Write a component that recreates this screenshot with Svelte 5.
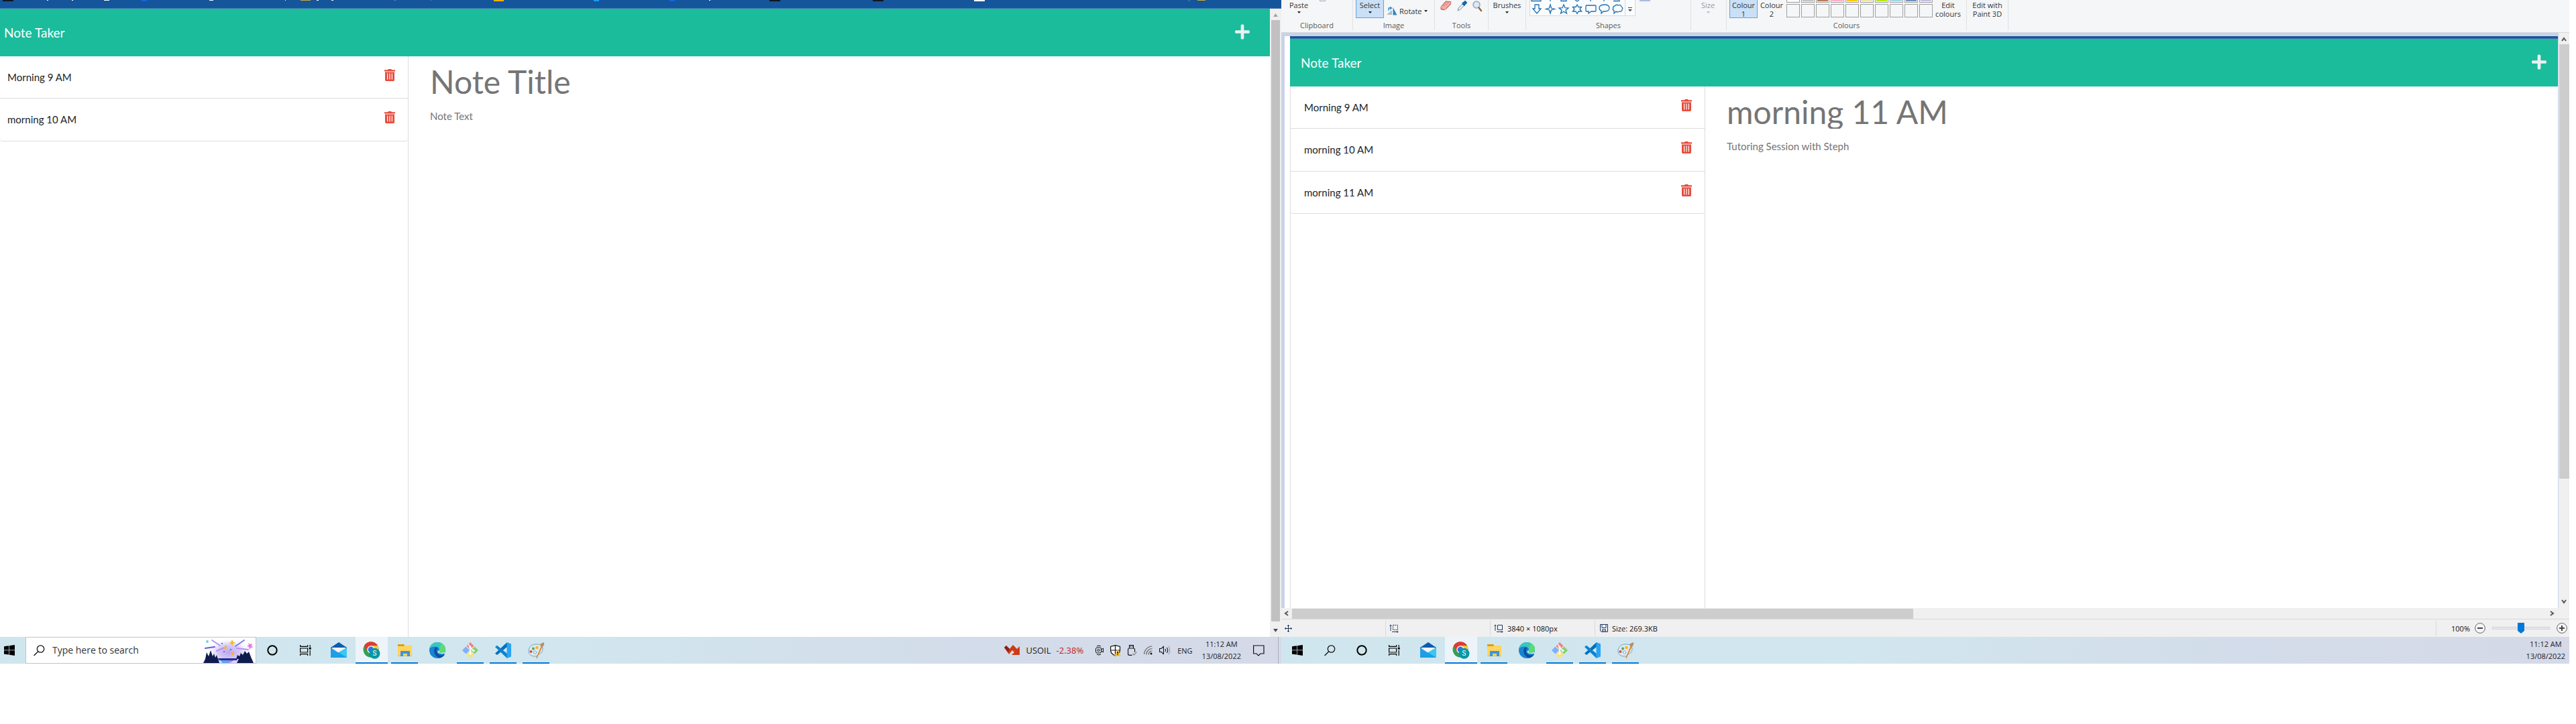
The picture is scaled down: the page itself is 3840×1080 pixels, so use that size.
<script>
  const leftNotes = ['Morning 9 AM', 'morning 10 AM'];
  const rightNotes = ['Morning 9 AM', 'morning 10 AM', 'morning 11 AM'];
  const swatches = ['#ffffff', '#c3c3c3', '#b97a57', '#ffaec9', '#ffc90e', '#efe4b0', '#b5e61d', '#99d9ea', '#7092be', '#c8bfe7'];
  const apps = [
    { name: 'Mail' },
    { name: 'Chrome', active: true },
    { name: 'Explorer', open: true },
    { name: 'Edge' },
    { name: 'Git', open: true },
    { name: 'Code', open: true },
    { name: 'Paint', open: true }
  ];
  let searchText = $state('');
  let zoom = $state(50);
</script>

{#snippet trash()}
  <svg width="16" height="18" viewBox="0 0 16 18" fill="currentColor" aria-hidden="true">
    <path d="M5 1.200 6 0h4l1 1.200h5V3.400H0V1.200zM1 4.600h14V16.600L14 18H2L1 16.600zM4 6.500v9h1.200v-9zM7.400 6.500v9h1.200v-9zM10.800 6.500v9H12v-9z" fill-rule="evenodd" />
  </svg>
{/snippet}

{#snippet navbar()}
  <header class="navbar">
    <a class="brand" href="/">Note Taker</a>
    <button class="new-note" aria-label="New note">
      <svg width="22" height="25" viewBox="0 0 448 512" fill="currentColor" aria-hidden="true">
        <path d="M416 208H272V64c0-17.67-14.33-32-32-32h-32c-17.67 0-32 14.33-32 32v144H32c-17.67 0-32 14.33-32 32v32c0 17.67 14.33 32 32 32h144v144c0 17.67 14.33 32 32 32h32c17.67 0 32-14.33 32-32V304h144c17.67 0 32-14.33 32-32v-32c0-17.67-14.33-32-32-32z" />
      </svg>
    </button>
  </header>
{/snippet}

{#snippet notes(list)}
  <ul class="notes">
    {#each list as note}
      <li><span>{note}</span><button class="delete" aria-label={`Delete ${note}`}>{@render trash()}</button></li>
    {/each}
  </ul>
{/snippet}

{#snippet caret()}
  <svg class="caret" width="5" height="3" viewBox="0 0 5 3" aria-hidden="true"><path d="M0 0h5L2.500 3z" fill="currentColor" /></svg>
{/snippet}

{#snippet searchIcon()}
  <svg width="17" height="17" viewBox="0 0 17 17" fill="none" stroke="#111" stroke-width="1.3" aria-hidden="true"><circle cx="10.500" cy="6" r="5.200" /><path d="M6.800 9.700.6 16" /></svg>
{/snippet}

{#snippet appIcon(name)}
  {#if name === 'Mail'}
    <svg width="24" height="24" viewBox="0 0 24 24" aria-hidden="true"><path d="M0 8 12 0l12 8v4H0z" fill="#0a5cad" /><path d="M2 8h20v5l-10 5L2 13z" fill="#f4f4f4" /><path d="M0 8l12 8L24 8v15H0z" fill="#1f9de8" /><path d="M24 8v15L11 15.400z" fill="#39c8f4" /><path d="M0 23 12 15l12 8z" fill="#1a9fe6" opacity=".7" /></svg>
  {:else if name === 'Chrome'}
    <svg width="26" height="26" viewBox="0 0 26 26" aria-hidden="true"><circle cx="12" cy="12" r="11.500" fill="#34a04f" /><path d="M2 6.300A11.500 11.500 0 0 1 22 6.300L12 12z" fill="#e33b2e" /><path d="M2 6.300A11.500 11.500 0 0 1 22 6.300L12 6.300 7 15z" fill="#e33b2e" /><path d="M12 6.300h10a11.500 11.500 0 0 1-10 17.200l5-8.700z" fill="#fcc934" /><circle cx="12" cy="12" r="5.700" fill="#fff" /><circle cx="12" cy="12" r="4.400" fill="#2f73e6" /><circle cx="17.500" cy="17.800" r="8" fill="#0997a7" /><text x="17.500" y="21.300" text-anchor="middle" font-family="Roboto, sans-serif" font-size="10" fill="#fff">S</text></svg>
  {:else if name === 'Explorer'}
    <svg width="24" height="24" viewBox="0 0 24 24" aria-hidden="true"><path d="M2 3h9l2 2h10v16H2z" fill="#ffd55e" /><path d="M2 3h9l1 3H2z" fill="#dc9d17" /><path d="M2 20h21v1H2z" fill="#eebb3a" /><path d="M6 21v-8h14v8h-4v-4h-6v4z" fill="#4094dd" /></svg>
  {:else if name === 'Edge'}
    <svg width="24" height="24" viewBox="0 0 24 24" aria-hidden="true"><circle cx="12" cy="12" r="12" fill="#1684d3" /><path d="M0 10C2 2 8 0 12 0c7 0 12 5 12 10 0 4-3 6-6 6s-4-1-4-2 1-1 1-3-2-4.500-6-4.500S1 8 0 10z" fill="#3cc5c1" /><path d="M12 0c7 0 12 5 12 10 0 4-3 6-6 6s-4-1-4-2 1-1 1-3c0-5 4-7 2-10z" fill="#5bdc73" /><path d="M9 8c-3 3-3 12 6 15.500C20 23 22 20 23 18c-5 3-13 1-12-6 0-2 2-3 2-3s-2-2-4-1z" fill="#0d4fa0" /><path d="M24 16c-4 2-10 2-12-2l3-2c-1 3 0 4 3 4 2 0 4-1 5-2z" fill="#d2e7ee" /></svg>
  {:else if name === 'Git'}
    <svg width="24" height="24" viewBox="0 0 24 24" aria-hidden="true"><path d="M12 0 6.500 5.500 12 11l5.500-5.500z" fill="#f87f80" /><path d="M5.500 6.500 0 12l5.500 5.500L11 12z" fill="#7eb0fb" /><path d="M18.500 6.500 13 12l5.500 5.500L24 12z" fill="#86cf62" /><path d="M12 13l-5.500 5.500L12 24l5.500-5.500z" fill="#fce173" /><path d="M9 3l3 4v10M12 8l5 5" fill="none" stroke="#fff" stroke-width="1.400" /><circle cx="12" cy="7.500" r="1.700" fill="#fff" /><circle cx="12" cy="17" r="1.700" fill="#fff" /><circle cx="17" cy="12.500" r="1.700" fill="#fff" /></svg>
  {:else if name === 'Code'}
    <svg width="24" height="24" viewBox="0 0 24 24" aria-hidden="true"><path d="M18 0v7L3 19l-3-2.300z" fill="#0070bc" /><path d="M0 7l3-2.300L18 17v7z" fill="#0a84d4" /><path d="M17.500 0 24 2.500v19L17.500 24z" fill="#2ba3f2" /></svg>
  {:else}
    <svg width="25" height="24" viewBox="0 0 25 24" aria-hidden="true"><path d="M12 3C5 3 1 8 1 13s4 8 9 8 4-2 6-3 6-2 6-8-4-7-10-7z" fill="#d8ebf6" stroke="#7ba0bc" /><circle cx="4.500" cy="14" r="2" fill="#d94d3f" /><circle cx="8" cy="9.500" r="2" fill="#5aa845" /><circle cx="13.500" cy="8" r="2.300" fill="#f6b91c" /><circle cx="10.500" cy="15" r="2" fill="#fff" stroke="#6c9fc4" /><path d="M20 5l2 1-8.500 18-1.500-.5z" fill="#e48a2d" /><path d="M18 3c2-1 4-3 6-2.500C25 3 23 5 22 7l-3-1z" fill="#b98b64" /></svg>
  {/if}
{/snippet}

{#snippet pinned()}
  <button class="tile small" aria-label="Cortana"><svg width="16" height="16" viewBox="0 0 16 16" aria-hidden="true"><circle cx="8" cy="8" r="6.700" fill="none" stroke="#000" stroke-width="2" /></svg></button>
  <button class="tile view" aria-label="Task view"><svg width="17" height="16" viewBox="0 0 17 16" fill="none" stroke="#000" stroke-width="1.200" aria-hidden="true"><path d="M.6 0v2.400h11V0M.6 16v-2.400h11V16M.6 5h11v6H.6zM15.200 0v3M15.200 8v8" /><path d="M13.700 3.700h3v3h-3z" fill="#000" stroke="none" /></svg></button>
  {#each apps as app}
    <button class="tile" class:open={app.open} class:active={app.active} aria-label={app.name}>{@render appIcon(app.name)}</button>
  {/each}
{/snippet}

{#snippet winLogo()}
  <svg width="16" height="16" viewBox="0 0 16 16" aria-hidden="true"><path d="M0 2.200 7 1.300v6.300H0zM7.700 1.200 16 0v7.600H7.700zM0 8.300h7v6.300L0 13.700zM7.700 8.300H16V16l-8.300-1.200z" /></svg>
{/snippet}

<div class="desktop">
  <section class="screen left">
    <div class="bookmarks">
      <svg width="1910" height="3" viewBox="0 0 1910 3" aria-hidden="true">
        <path d="M4 0h16v2H4zM1147 0h16v2h-16zM1301 0h16v2h-16z" fill="#101522" />
        <path d="M70 0h2v1h-2zM107 0h2v1h-2zM155 0h8v1h-8zM312 0h6v1h-6zM425 0h1v1h-1zM472 0h3v1h-3zM494 0h3v1h-3zM1057 0h2v1h-2zM1452 0h16v2h-16z" fill="#fff" />
        <path d="M448 0h15v1h-15zM1785 0h12v1h-12z" fill="#c9a83c" /><path d="M736 0h15v2h-15z" fill="#fcae17" />
        <path d="M211 0h8v2h-8zM998 0h8v2h-8z" fill="#1465e0" /><path d="M885 0h8v2h-8z" fill="#1b9bff" />
        <path d="M588 0h2v1h-2zM642 0h1v1h-1zM1772 0h1v2h-1z" fill="#6f93bd" />
      </svg>
    </div>
    <div class="browser">
      <div class="page">
        {@render navbar()}
        <main class="body">
          {@render notes(leftNotes)}
          <form class="editor">
            <input class="title" aria-label="Note title" placeholder="Note Title" />
            <textarea aria-label="Note text" placeholder="Note Text"></textarea>
          </form>
        </main>
      </div>
      <div class="vbar chrome" aria-hidden="true">
        <svg width="7" height="5" viewBox="0 0 7 5"><path d="M0 5h7L3.500 0z" fill="#a3a3a3" /></svg>
        <div class="thumb"></div>
        <svg width="7" height="5" viewBox="0 0 7 5"><path d="M0 0h7L3.500 5z" fill="#505050" /></svg>
      </div>
    </div>
    <footer class="taskbar">
      <button class="start" aria-label="Start">{@render winLogo()}</button>
      <label class="search">
        {@render searchIcon()}
        <input bind:value={searchText} aria-label="Search" placeholder="Type here to search" />
        <svg width="78" height="38" viewBox="0 0 78 38" aria-hidden="true">
          <defs>
            <radialGradient id="glow"><stop offset="0" stop-color="#bda5ee" /><stop offset=".5" stop-color="#d5cdf8" /><stop offset="1" stop-color="#fff" stop-opacity="0" /></radialGradient>
            <linearGradient id="lake"><stop offset="0" stop-color="#35b1ff" /><stop offset="1" stop-color="#b480e8" /></linearGradient>
          </defs>
          <ellipse cx="38" cy="22" rx="34" ry="22" fill="url(#glow)" />
          <g stroke-width="2" stroke-linecap="round"><path d="M13 4l12 8" stroke="#a99af0" /><path d="M3 16l14-2" stroke="#5e5ce6" /><path d="M61 4 48 13" stroke="#7a78f5" /><path d="M20 20l14-6M50 16l17 2" stroke="#b98df0" /></g>
          <path d="M43 4l1 3 3 1-3 1-1 3-1-3-3-1 3-1zM33 12l1 2 2 1-2 1-1 2-1-2-2-1 2-1z" fill="#eebb3c" stroke="#eebb3c" />
          <path d="M67 8l3 2 3-1-1 3 2 3-3 0-2 3-1-4-3-1 3-2z" fill="#e478f0" /><circle cx="44" cy="24" r="2" fill="#fbb216" /><circle cx="6" cy="6" r="2" fill="#67d4e6" />
          <path d="M27 8h2v2h-2zM30 20h2v2h-2zM40 17h2v2h-2z" fill="#4c7bd0" />
          <path d="M20 33h34v5H20z" fill="#d9d3f8" /><path d="M26 33h20q-3 4-8 5H28z" fill="url(#lake)" />
          <path d="M0 38l3-6 2-10 3 6 3-9 3 9 2-4 2 6 2-4 4 12zM50 38l3-6-4 0 2-6 3 2 2-5 3 3 3-6 3 4 3-3 3 8 4 9z" fill="#101b4e" />
          <path d="M21 31h31l-2 3H24z" fill="#27308c" />
        </svg>
      </label>
      {@render pinned()}
      <div class="tray">
        <button class="stock">
          <svg width="24" height="16" viewBox="0 0 24 16" aria-hidden="true"><path d="M0 4 3 1l5 5 5-6 6 6 4-4v13H11l4-4-3-3-5 6z" fill="#cf3a14" /><path d="M0 4 3 1l5 5-2 5z" fill="#8b2117" /></svg>
          <span>USOIL</span><span class="fall">-2.38%</span>
        </button>
        <svg width="12" height="16" viewBox="0 0 12 16" fill="none" stroke="#111" aria-hidden="true"><rect x=".5" y="4" width="8" height="8" rx="2" /><circle cx="4.500" cy="8" r="1.500" /><path d="M8.500 7l3-2v6l-3-2M2 2q3-2 6 0M2 14q3 2 6 0" /></svg>
        <svg width="16" height="17" viewBox="0 0 16 17" aria-hidden="true"><path d="M7.500.7 14.500 2.500V8q0 5-7 8.300Q.6 13 .6 8V2.500z" fill="#fff" stroke="#111" stroke-width="1.200" /><path d="M7.500 1v15M1 8h13" stroke="#111" stroke-width="1.200" /><path d="M11 7l5 9.500H6z" fill="#fcc02a" /><path d="M10.400 10h1.400v3h-1.400zM10.400 14h1.400v1.200h-1.400z" /></svg>
        <svg width="14" height="16" viewBox="0 0 14 16" fill="none" stroke="#111" stroke-width="1.100" aria-hidden="true"><path d="M2.500 5V.6h6V5M.6 15V7q0-2 2-2h6q2 0 2 2v4M.6 13q0 2.400 2 2.400h4" /><path d="M4 2.500h1M6.500 2.500h1" /><path d="M7.500 13l2 2 4-4.500" stroke="#777" /></svg>
        <svg width="13" height="14" viewBox="0 0 13 14" fill="none" stroke="#111" stroke-width="1.200" aria-hidden="true"><path d="M.6 13A12.400 12.400 0 0 1 12.500 1M3.800 13.500A9 9 0 0 1 12.500 4.500M7 13.500A6 6 0 0 1 12.500 8" stroke="#666" /><circle cx="11" cy="12" r="1.500" fill="#111" stroke="none" /></svg>
        <svg width="17" height="14" viewBox="0 0 17 14" fill="none" stroke="#111" stroke-width="1.100" aria-hidden="true"><path d="M.6 4.500h2.500L6.500 1.500v11l-3.400-3H.6zM9 5q1.400 2 0 4M11.300 3q3 4 0 8" /><path d="M13.800 1q4 6 0 12" stroke="#999" /></svg>
        <span class="lang">ENG</span>
        <time class="clock"><span>11:12 AM</span><span>13/08/2022</span></time>
        <button aria-label="Notifications"><svg width="17" height="17" viewBox="0 0 17 17" fill="none" stroke="#111" stroke-width="1.200" aria-hidden="true"><path d="M.6 1h15.400v12h-5L8 16l-3-3H.6z" /></svg></button>
        <button class="peek" aria-label="Show desktop"></button>
      </div>
    </footer>
  </section>

  <section class="screen right">
    <div class="ribbon">
      <div class="group clipboard">
        <div class="tools"><button class="tall">Paste{@render caret()}</button><svg class="top" width="9" height="2" viewBox="0 0 9 2" aria-hidden="true"><path d="M.5 0v1.500h8V0" fill="none" stroke="#9ab" /></svg></div>
        <span class="label">Clipboard</span>
      </div>
      <div class="group image">
        <div class="tools">
          <button class="tall chosen">Select{@render caret()}</button>
          <button class="rotate">
            <svg width="16" height="13" viewBox="0 0 16 13" aria-hidden="true"><path d="M0 12 8 5v7z" fill="#b5bbc0" /><path d="M9.500 1 15.500 12.500h-6z" fill="#2e86c1" /><path d="M3 6V2h4M5 0l2.500 2L5 4" fill="none" stroke="#2b8bd8" stroke-width="1.300" /></svg>
            Rotate{@render caret()}
          </button>
        </div>
        <span class="label">Image</span>
      </div>
      <div class="group drawing">
        <div class="tools icons">
          <svg width="17" height="15" viewBox="0 0 17 15" aria-hidden="true"><path d="M8 1 16 1.500 15 6 7 14 1 13 1 9z" fill="#ee9a94" stroke="#bd605a" /><path d="M1 9l6 1v4M7 10l9-8" fill="none" stroke="#f8c6c2" /></svg>
          <svg width="15" height="16" viewBox="0 0 15 16" aria-hidden="true"><path d="M1 15l1-4 6-6 2.500 2.500-6 6z" fill="#dfeaf4" stroke="#7896b0" /><path d="M8 3l4 4M8.500 4.500 12 1l2 2-3.500 3.500z" stroke="#1767ab" stroke-width="2" fill="#1767ab" /></svg>
          <svg width="15" height="17" viewBox="0 0 15 17" aria-hidden="true"><circle cx="6" cy="6" r="5" fill="#d7e9fa" stroke="#9aa4af" stroke-width="1.500" /><path d="M9.500 10.500 13 15" stroke="#99653d" stroke-width="2.500" stroke-linecap="round" /></svg>
        </div>
        <span class="label">Tools</span>
      </div>
      <div class="group brushes"><div class="tools"><button class="tall">Brushes{@render caret()}</button></div></div>
      <div class="group shapes">
        <div class="tools">
          <div class="gallery">
            <svg width="141" height="23" viewBox="0 0 141 23" fill="#f8fcff" stroke="#1f6fb0" stroke-width="1.300" aria-hidden="true">
              <path d="M2 0v1.500h14V0M30 0v2M46 0v1.500h8V0M67 0l3 2 3-2M90 0v2M110 0v2M124 1.500h9V0" fill="none" />
              <path d="M7 7h6v6h3l-6 7-6-7h3zM30 7l1.500 5 5 1.500-5 1.500L30 20l-1.500-5-5-1.500 5-1.500zM50 7l2 4.700 5 .3-4 3.200 1.500 4.800-4.500-2.700-4.500 2.700L47 15.200 43 12l5-.3zM70 7l2 3.500h4.500L74 13.500l2.500 3.500H72l-2 3.500L68 17h-4.500l2.500-3.500-2.500-3H68zM84 8h13q1 0 1 1v7q0 1-1 1h-6l-4 3v-3h-3q-1 0-1-1V9q0-1 1-1zM111 7q7 0 7 5t-7 5h-2l-3 3v-4q-3-1-3-4 0-5 8-5zM126 9q2-3 5-1 4-2 5 2 3 2 1 4 0 4-4 3-3 2-5 0l-3 3v-4q-3-2-1-4-1-3 2-3z" />
            </svg>
            <button class="more" aria-label="More shapes"><svg width="6" height="6" viewBox="0 0 6 6" aria-hidden="true"><path d="M0 0h6v1H0zM0 3h6L3 6z" fill="#444" /></svg></button>
          </div>
          <svg class="top" width="16" height="2" viewBox="0 0 16 2" aria-hidden="true"><path d="M0 0h16v2H0z" fill="#a9bcdb" /></svg>
        </div>
        <span class="label">Shapes</span>
      </div>
      <div class="group size"><div class="tools"><button class="tall" disabled>Size{@render caret()}</button></div></div>
      <div class="group colours">
        <div class="tools">
          <button class="tall chosen"><span>Colour</span><span>1</span></button>
          <button class="tall"><span>Colour</span><span>2</span></button>
          <div class="palette">
            {#each swatches as colour}<button class="swatch top-row" aria-label={`Colour ${colour}`}><i style:background={colour}></i></button>{/each}
            {#each swatches as _, i}<button class="swatch" aria-label={`Custom colour ${i + 1}`}></button>{/each}
          </div>
          <button class="tall"><span>Edit</span><span>colours</span></button>
        </div>
        <span class="label">Colours</span>
      </div>
      <div class="group paint3d"><div class="tools"><button class="tall"><span>Edit with</span><span>Paint 3D</span></button></div></div>
    </div>
    <div class="workspace">
      <div class="canvas">
        <div class="picture">
          <div class="strip"></div>
          {@render navbar()}
          <main class="body">
            {@render notes(rightNotes)}
            <form class="editor">
              <input class="title" aria-label="Note title" value="morning 11 AM" readonly />
              <textarea aria-label="Note text" readonly>Tutoring Session with Steph</textarea>
            </form>
          </main>
        </div>
      </div>
      <div class="vbar paint" aria-hidden="true">
        <svg width="8" height="7" viewBox="0 0 8 7"><path d="M1 6l3-4 3 4" fill="none" stroke="#555" stroke-width="2" /></svg>
        <div class="thumb"></div>
        <svg width="8" height="7" viewBox="0 0 8 7"><path d="M1 1l3 4 3-4" fill="none" stroke="#555" stroke-width="2" /></svg>
      </div>
    </div>
    <div class="hbar" aria-hidden="true">
      <svg width="7" height="8" viewBox="0 0 7 8"><path d="M6 1 2 4l4 3" fill="none" stroke="#555" stroke-width="2" /></svg>
      <div class="rail"><div class="thumb"></div></div>
      <svg width="7" height="8" viewBox="0 0 7 8"><path d="M1 1l4 3-4 3" fill="none" stroke="#555" stroke-width="2" /></svg>
    </div>
    <div class="status">
      <div class="cell"><svg width="11" height="11" viewBox="0 0 11 11" fill="none" stroke="#1f3864" aria-hidden="true"><path d="M5.500 0v11M0 5.500h11M4 1.500h3M4 9.500h3M1.500 4v3M9.500 4v3" /></svg></div>
      <div class="cell"><svg width="14" height="13" viewBox="0 0 14 13" fill="none" stroke="#1f3864" aria-hidden="true"><path d="M2 1v9M.5 2.500 2 1l1.500 1.500M4 11.500h9M11.500 10l1.500 1.500-1.500 1.500" /><path d="M5.500 1.500h7v7h-7z" stroke-dasharray="2 1" /></svg></div>
      <div class="cell"><svg width="14" height="13" viewBox="0 0 14 13" fill="none" stroke="#1f3864" aria-hidden="true"><path d="M2 1v9M.5 2.500 2 1l1.500 1.500M4 11.500h9M11.500 10l1.500 1.500-1.500 1.500M5.500 1.500h7v7h-7z" /></svg><span>3840 × 1080px</span></div>
      <div class="cell wide"><svg width="12" height="12" viewBox="0 0 12 12" fill="none" stroke="#1f3864" aria-hidden="true"><path d="M.5.5h11v11H2L.5 10zM3 1v4.500h6V1M3.500 11V8h5v3M6 9v2" /></svg><span>Size: 269.3KB</span></div>
      <div class="zoom">
        <span>100%</span>
        <button class="round" aria-label="Zoom out"><svg width="16" height="16" viewBox="0 0 16 16" aria-hidden="true"><circle cx="8" cy="8" r="7.400" fill="#f5f5f5" stroke="#666" /><path d="M4 7h8v2H4z" fill="#444" /></svg></button>
        <input type="range" aria-label="Zoom level" min="0" max="100" bind:value={zoom} />
        <button class="round" aria-label="Zoom in"><svg width="16" height="16" viewBox="0 0 16 16" aria-hidden="true"><circle cx="8" cy="8" r="7.400" fill="#f5f5f5" stroke="#666" /><path d="M4 7h3V4h2v3h3v2H9v3H7V9H4z" fill="#444" /></svg></button>
      </div>
    </div>
    <footer class="taskbar">
      <button class="start" aria-label="Start">{@render winLogo()}</button>
      <button class="tile small" aria-label="Search">{@render searchIcon()}</button>
      {@render pinned()}
      <div class="tray"><time class="clock"><span>11:12 AM</span><span>13/08/2022</span></time></div>
    </footer>
  </section>
</div>

<style>
  :global(body) { background: #fff; }
  * { box-sizing: border-box; }
  svg { display: block; flex: none; }
  button { border: 0; padding: 0; margin: 0; background: none; font: inherit; color: inherit; display: flex; align-items: center; justify-content: center; }
  input, textarea { border: 0; padding: 0; margin: 0; background: none; font: inherit; color: inherit; outline: 0; min-width: 0; }

  .desktop { display: grid; grid-template-columns: 191fr 192fr; height: 100vh; padding: 0 10px 90px 0; font-family: "Open Sans", "Noto Sans", sans-serif; font-size: 11px; color: #222; }
  .screen { display: flex; flex-direction: column; min-width: 0; min-height: 0; }
  .bookmarks { height: 13px; background: #15559b; border-bottom: 1px solid #4474ae; overflow: hidden; }
  .browser { flex: 1; display: flex; min-height: 0; }
  .page { flex: 1; display: flex; flex-direction: column; min-width: 0; }

  .navbar { height: 71px; flex: none; display: flex; align-items: center; justify-content: space-between; background: #1abc9c; color: #fff; padding: 0 30px 0 6px; font-family: Lato, sans-serif; }
  .right .navbar { padding: 0 17px 0 16px; }
  .brand { color: #fff; text-decoration: none; font-size: 19px; line-height: 28px; }
  .new-note { color: #ecf0f1; padding-bottom: 3px; }
  .body { flex: 1; display: flex; min-height: 0; font-family: Lato, sans-serif; font-size: 15px; line-height: 24px; }
  .notes { width: 609px; flex: none; list-style: none; margin: 0; padding: 0; border-right: 1px solid #dcdcdc; color: #212529; }
  .right .notes { width: 619px; border-left: 1px solid #dcdcdc; }
  .notes li { display: flex; justify-content: space-between; align-items: flex-start; height: 63px; padding: 19px 19px 0 11px; border-bottom: 1px solid #dcdcdc; }
  .notes li:nth-child(even) { height: 64px; }
  .notes li:last-child { border-radius: 0 0 4px 4px; }
  .right .notes li { padding-left: 20px; }
  .delete { color: #e74c3c; }
  .editor { flex: 1; display: flex; flex-direction: column; padding: 12px 32px; min-width: 0; }
  .title { flex: none; height: 51px; font-size: 48px; color: #757575; }
  .editor textarea { flex: 1; margin-top: 14px; resize: none; color: #757575; }
  ::placeholder { color: #757575; opacity: 1; }

  .vbar { width: 17px; flex: none; display: flex; flex-direction: column; align-items: center; background: #f0f0f0; }
  .vbar .thumb { background: #c1c1c1; }
  .chrome { padding: 7px 0; }
  .chrome .thumb { width: 13px; flex: 1; margin: 5px 0 11px; }
  .paint { width: 16px; padding: 6px 0; }
  .paint .thumb { width: 15px; flex: 0 1 648px; margin: 4px 0 auto; background: #cdcdcd; }

  .ribbon { height: 49px; flex: none; display: flex; background: #f5f6f7; border-bottom: 1px solid #d5d8dc; line-height: 15px; color: #333; }
  .group { height: 45px; flex: none; display: flex; flex-direction: column; border-right: 1px solid #e0e1e3; }
  .tools { height: 32px; display: flex; align-items: flex-start; }
  .label { text-align: center; color: #5a5a5a; }
  .tall { height: 27px; flex-direction: column; justify-content: flex-start; }
  .tall span + span { margin-top: -2px; }
  .tall .caret { margin-top: 2px; }
  .tall:disabled { color: #999; }
  .chosen { background: #c9e0f7; border: solid #62a2e4; border-width: 0 1px 1px; }
  .caret { color: #222; }
  .tall:disabled .caret { color: #bbb; }
  .clipboard { width: 107px; }
  .clipboard .tools { padding-left: 12px; gap: 17px; }
  .image { width: 122px; }
  .image .tools { padding-left: 4px; gap: 4px; }
  .image .chosen { width: 42px; }
  .rotate { padding-top: 9px; gap: 3px; }
  .drawing { width: 80px; }
  .icons { padding: 1px 0 0 8px; gap: 8px; }
  .brushes { width: 56px; }
  .brushes .tools { justify-content: center; }
  .shapes { width: 246px; }
  .shapes .tools { padding-left: 5px; gap: 6px; }
  .gallery { height: 24px; display: flex; border: solid #d5d8dc; border-width: 0 1px 1px; background: #fbfcfd; }
  .more { width: 15px; border-left: 1px solid #d5d8dc; padding-top: 4px; }
  .size { width: 53px; }
  .size .tools { padding-left: 15px; }
  .colours { width: 358px; }
  .colours .tools { padding-left: 4px; }
  .colours .tall { width: 42px; }
  .palette { display: grid; grid-template-columns: repeat(10, 20px); gap: 2px; width: 218px; margin: 0 2px 0 1px; }
  .swatch { width: 20px; height: 20px; border: 1px solid #a0a0a0; }
  .top-row { height: 4px; border-top: 0; padding: 0 1px 1px; align-items: stretch; }
  .top-row i { flex: 1; }
  .paint3d { width: 62px; }
  .paint3d .tools { justify-content: center; }

  .workspace { flex: 1; display: flex; min-height: 0; }
  .canvas { flex: 1; display: flex; min-width: 0; padding: 5px 1px 0 5px; background: #c9d3e7; }
  .picture { flex: 1; display: flex; flex-direction: column; min-width: 0; background: #fff; border-left: 8px solid #fff; }
  .strip { height: 4px; background: #15559b; border-bottom: 1px solid #4474ae; }
  .hbar { height: 17px; flex: none; display: flex; align-items: center; background: #f0f0f0; border-bottom: 1px solid #d9d9d9; padding: 0 22px 0 4px; gap: 5px; }
  .rail { flex: 1; height: 15px; }
  .rail .thumb { width: 49.5%; height: 15px; background: #cdcdcd; }
  .status { height: 26px; flex: none; display: flex; background: #f0f0f0; color: #111; }
  .cell { width: 156px; display: flex; align-items: center; gap: 6px; padding-left: 5px; border-right: 1px solid #d9d9d9; margin: 1px 0; }
  .wide { flex: 1; padding-left: 7px; }
  .zoom { width: 198px; display: flex; align-items: center; padding-right: 3px; }
  .zoom span { flex: 1; text-align: right; padding-right: 7px; }
  .zoom input { width: 86px; height: 18px; margin: 0 10px; appearance: none; }
  .zoom input::-webkit-slider-runnable-track { height: 4px; border: 1px solid #d0d0d0; background: #e7eaea; }
  .zoom input::-webkit-slider-thumb { appearance: none; width: 10px; height: 16px; margin-top: -7px; background: #0078d7; clip-path: polygon(0 0, 100% 0, 100% 75%, 50% 100%, 0 75%); }

  .taskbar { height: 40px; flex: none; display: flex; background: linear-gradient(90deg, #d0e6ee, #d1e6ee 45%, #d3dcea 75%, #d5d9e8); }
  .start { width: 38px; padding-left: 6px; }
  .left .start { justify-content: flex-start; }
  .search { width: 344px; display: flex; align-items: center; background: #fff; border: 1px solid #c3c3c3; padding-left: 11px; }
  .search input { flex: 1; padding-left: 11px; font-size: 14px; line-height: 20px; }
  .search ::placeholder { color: #333; }
  .tile { width: 48px; margin-right: 1px; }
  .open { width: 40px; margin: 0 5px 0 4px; border-bottom: 2px solid #0078d7; padding-top: 2px; }
  .active { background: #edf4f9; border-bottom: 2px solid #0078d7; padding-top: 2px; }
  .right .start { width: 48px; padding: 0; }
  .right .small { margin: 0; }
  .left .view { margin-right: 2px; }
  .right .view { margin-right: 3px; }
  .tray { flex: 1; display: flex; align-items: center; justify-content: flex-end; gap: 10px; }
  .right .tray { padding-right: 6px; }
  .stock { gap: 8px; font-size: 13px; margin-right: 8px; }
  .clock { display: flex; flex-direction: column; align-items: center; line-height: 18px; margin: 0 8px 0 4px; }
  .right .clock { margin: 0; }
  .fall { color: #c4201c; }
  .peek { align-self: stretch; width: 5px; margin-left: 10px; border-left: 1px solid #a9afbf; }
</style>
